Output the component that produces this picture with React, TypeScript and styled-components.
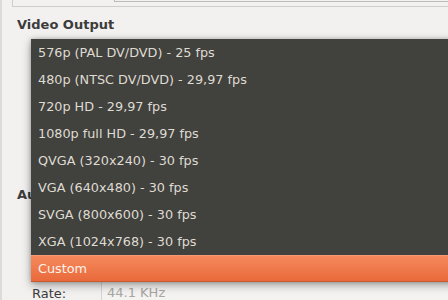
import React from "react";
import styled, { createGlobalStyle } from "styled-components";

const GlobalStyle = createGlobalStyle`
  html, body {
    margin: 0;
    padding: 0;
    background: #f2f1f0;
  }
  body {
    font-family: "DejaVu Sans", "Noto Sans", sans-serif;
  }
`;

const Window = styled.div`
  position: relative;
  width: 448px;
  height: 300px;
  overflow: hidden;
  background: #f2f1f0;
  border-left: 2px solid #dcdbd9;
  box-sizing: border-box;
`;

const TopFrame = styled.div`
  margin-left: 10px;
  height: 6px;
  border-left: 1px solid #cfcdca;
  border-bottom: 1px solid #cfcdca;
  display: flex;
`;

const TopEntry = styled.div`
  margin-left: 101px;
  flex: 1;
  height: 1px;
  border-left: 1px solid #bdbbb8;
  border-bottom: 1px solid #bdbbb8;
`;

const SectionTitle = styled.div<{ top: number }>`
  margin: ${(p) => p.top}px 0 0 15px;
  font-size: 13px;
  font-weight: bold;
  color: #3c3c3c;
  line-height: 16px;
`;

const FieldRow = styled.div<{ top: number }>`
  display: flex;
  align-items: center;
  margin: ${(p) => p.top}px 0 0 30px;
  height: 22px;
`;

const FieldLabel = styled.span`
  width: 69px;
  font-size: 13px;
  color: #3c3c3c;
`;

const FieldValue = styled.span`
  flex: 1;
  height: 22px;
  line-height: 22px;
  border-left: 1px solid #d6d4d1;
  padding-left: 5px;
  font-size: 13px;
  color: #a8a6a2;
  background: #f4f3f2;
`;

const Menu = styled.div`
  position: absolute;
  left: 29px;
  top: 39px;
  right: -12px;
  background: #41413d;
  box-shadow: 0 3px 9px rgba(0, 0, 0, 0.35), 0 0 4px rgba(0, 0, 0, 0.2);
`;

const MenuItem = styled.div<{ $active?: boolean }>`
  height: 27px;
  line-height: 25px;
  padding-left: 7px;
  font-size: 12.8px;
  box-sizing: border-box;
  white-space: nowrap;
  color: ${(p) => (p.$active ? "#fdf3ed" : "#dfdbd2")};
  background: ${(p) =>
    p.$active ? "linear-gradient(#f5895c, #e96a3b)" : "transparent"};
  border-top: 1px solid ${(p) => (p.$active ? "#f79a73" : "transparent")};
  border-bottom: 1px solid ${(p) => (p.$active ? "#c65a2e" : "transparent")};
`;

const items = [
  "576p (PAL DV/DVD) - 25 fps",
  "480p (NTSC DV/DVD) - 29,97 fps",
  "720p HD - 29,97 fps",
  "1080p full HD - 29,97 fps",
  "QVGA (320x240) - 30 fps",
  "VGA (640x480) - 30 fps",
  "SVGA (800x600) - 30 fps",
  "XGA (1024x768) - 30 fps",
  "Custom",
];

export default function App() {
  return (
    <>
      <GlobalStyle />
      <Window>
        <TopFrame>
          <TopEntry />
        </TopFrame>
        <SectionTitle top={10}>Video Output</SectionTitle>
        <SectionTitle top={154}>Audio Output</SectionTitle>
        <FieldRow top={79}>
          <FieldLabel>Rate:</FieldLabel>
          <FieldValue>44.1 KHz</FieldValue>
        </FieldRow>
        <Menu>
          {items.map((item) => (
            <MenuItem key={item} $active={item === "Custom"}>
              {item}
            </MenuItem>
          ))}
        </Menu>
      </Window>
    </>
  );
}
